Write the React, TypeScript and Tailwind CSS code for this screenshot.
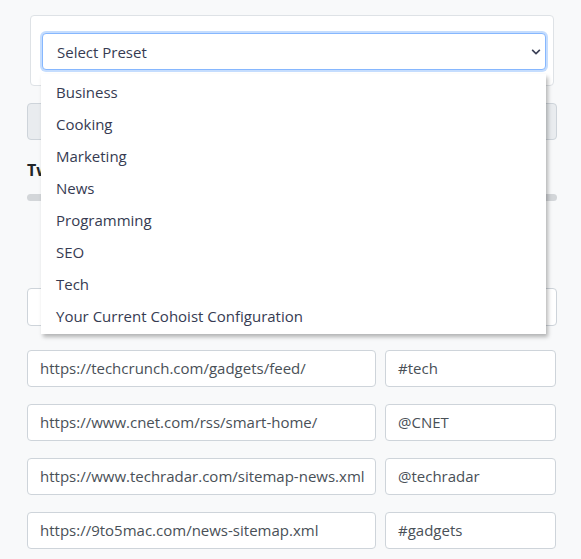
import { FaChevronDown } from "react-icons/fa";

const presets = [
  "Business",
  "Cooking",
  "Marketing",
  "News",
  "Programming",
  "SEO",
  "Tech",
  "Your Current Cohoist Configuration",
];

const feeds = [
  { url: "https://techcrunch.com/gadgets/feed/", tag: "#tech" },
  { url: "https://www.cnet.com/rss/smart-home/", tag: "@CNET" },
  { url: "https://www.techradar.com/sitemap-news.xml", tag: "@techradar" },
  { url: "https://9to5mac.com/news-sitemap.xml", tag: "#gadgets" },
];

function PresetSelect() {
  return (
    <div className="relative ml-[1px] w-[506px]">
      <div className="mx-[1px] flex h-[37px] items-center justify-between rounded-[4px] border border-[#86b7fe] bg-white pl-[14px] pr-[4px] pt-[1px] shadow-[0_0_0_2px_#c5ddfe]">
        <span className="text-[15px] text-[#363b52]">Select Preset</span>
        <FaChevronDown size={10} className="text-[#3a3f55]" />
      </div>
      <div className="absolute left-0 top-full z-10 mt-[4px] w-[505px] bg-white pb-[2px] pt-[2px] shadow-[2px_3px_4px_rgba(0,0,0,0.28)]">
        {presets.map((name) => (
          <div
            key={name}
            className="flex h-[32px] items-center px-[15px] text-[15px] text-[#363b52]"
          >
            {name}
          </div>
        ))}
      </div>
    </div>
  );
}

export default function App() {
  return (
    <div
      className="min-h-screen bg-[#f8f9fa] pl-[27px] pt-[15px]"
      style={{ fontFamily: '"Open Sans", "Noto Sans", sans-serif' }}
    >
      <div className="ml-[3px] w-[524px] rounded-[4px] border border-[#dee2e6] bg-white pb-[15px] pl-[9px] pt-[17px]">
        <PresetSelect />
      </div>

      <div className="mt-[17px] h-[37px] w-[530px] rounded-[4px] border border-[#ced4da] bg-[#e9ecef]" />

      <div className="mt-[18px] text-[16px] font-bold text-[#212529]">
        Tweet Frequency
      </div>

      <div className="mt-[12px] h-[7px] w-[530px] rounded-full bg-[#d3d6d9]" />

      <div className="mt-[87px] h-[38px] w-[530px] rounded-[4px] border border-[#ced4da] bg-white" />

      <div className="mt-[24px] flex flex-col gap-[17px]">
        {feeds.map((feed) => (
          <div key={feed.url} className="flex gap-[9px]">
            <div className="flex h-[37px] w-[349px] items-center overflow-hidden whitespace-nowrap rounded-[4px] border border-[#ced4da] bg-white px-[12px] text-[15px] text-[#495057]">
              {feed.url}
            </div>
            <div className="flex h-[37px] w-[171px] items-center whitespace-nowrap rounded-[4px] border border-[#ced4da] bg-white px-[12px] text-[15px] text-[#495057]">
              {feed.tag}
            </div>
          </div>
        ))}
      </div>
    </div>
  );
}
